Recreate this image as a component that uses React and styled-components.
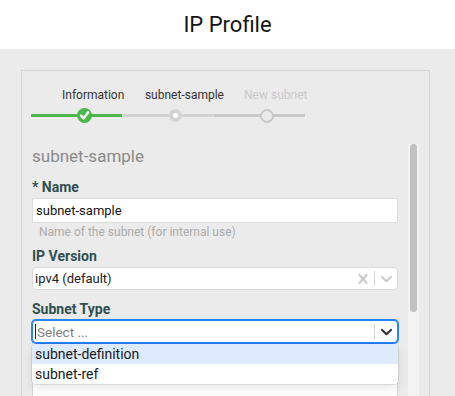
import React from "react";
import styled, { createGlobalStyle } from "styled-components";

const steps = [
  { label: "Information", state: "done" },
  { label: "subnet-sample", state: "current" },
  { label: "New subnet", state: "todo" },
];

const App = () => {
  return (
    <>
      <GlobalStyle />
      <Header>IP Profile</Header>
      <Main>
        <Panel>
          <Stepper>
            {steps.map((step, i) => (
              <Step key={step.label}>
                <StepLabel $muted={step.state === "todo"}>{step.label}</StepLabel>
                <Track $color={i === 0 ? "#4cb84c" : i === 1 ? "#d3d3d3" : "#c8c8c8"}>
                  {step.state === "done" && (
                    <DoneDot>
                      <svg width="15" height="15" viewBox="0 0 15 15">
                        <path
                          d="M4 7.6 L6.6 10.4 L11.2 4.2"
                          fill="none"
                          stroke="#fff"
                          strokeWidth="2.4"
                          strokeLinecap="round"
                          strokeLinejoin="round"
                        />
                      </svg>
                    </DoneDot>
                  )}
                  {step.state === "current" && <CurrentDot />}
                  {step.state === "todo" && <TodoDot />}
                </Track>
              </Step>
            ))}
          </Stepper>

          <ScrollArea>
            <Content>
              <Heading>subnet-sample</Heading>

              <Field>
                <Label>* Name</Label>
                <TextInput defaultValue="subnet-sample" />
                <Help>Name of the subnet (for internal use)</Help>
              </Field>

              <Field>
                <Label>IP Version</Label>
                <SelectBox>
                  <SelectValue>ipv4 (default)</SelectValue>
                  <Indicator>
                    <svg width="20" height="20" viewBox="0 0 20 20" fill="currentColor">
                      <path d="M14.348 14.849c-0.469 0.469-1.229 0.469-1.697 0l-2.651-3.030-2.651 3.029c-0.469 0.469-1.229 0.469-1.697 0-0.469-0.469-0.469-1.229 0-1.697l2.758-3.15-2.759-3.152c-0.469-0.469-0.469-1.228 0-1.697s1.228-0.469 1.697 0l2.652 3.031 2.651-3.031c0.469-0.469 1.228-0.469 1.697 0s0.469 1.229 0 1.697l-2.758 3.152 2.758 3.15c0.469 0.469 0.469 1.229 0 1.698z" />
                    </svg>
                  </Indicator>
                  <Separator />
                  <Indicator>
                    <Chevron />
                  </Indicator>
                </SelectBox>
              </Field>

              <Field>
                <Label>Subnet Type</Label>
                <SelectWrap>
                  <SelectBox $focused>
                    <SelectValue $placeholder>
                      <Caret />
                      Select ...
                    </SelectValue>
                    <Separator />
                    <Indicator $dark>
                      <Chevron />
                    </Indicator>
                  </SelectBox>
                  <Menu>
                    <Option $active>subnet-definition</Option>
                    <Option>subnet-ref</Option>
                  </Menu>
                </SelectWrap>
              </Field>

              <TextArea aria-label="Description" />
            </Content>
            <ScrollRail>
              <ScrollThumb />
            </ScrollRail>
          </ScrollArea>
        </Panel>
      </Main>
    </>
  );
};

const Chevron = () => (
  <svg width="19" height="19" viewBox="0 0 20 20" fill="currentColor">
    <path d="M4.516 7.548c0.436-0.446 1.043-0.481 1.576 0l3.908 3.747 3.908-3.747c0.533-0.481 1.141-0.446 1.574 0 0.436 0.445 0.408 1.197 0 1.615-0.406 0.418-4.695 4.502-4.695 4.502-0.217 0.223-0.502 0.335-0.787 0.335s-0.57-0.112-0.789-0.335c0 0-4.287-4.084-4.695-4.502s-0.436-1.17 0-1.615z" />
  </svg>
);

//STYLED
const GlobalStyle = createGlobalStyle`
  html, body {
    margin: 0;
    padding: 0;
    background: #ebebeb;
    overflow: hidden;
    font-family: Roboto, "Liberation Sans", sans-serif;
  }
  * {
    box-sizing: border-box;
  }
`;

const Header = styled.header`
  height: 49px;
  background: #fff;
  display: flex;
  align-items: center;
  justify-content: center;
  font-size: 22px;
  color: #151515;
`;

const Main = styled.main`
  padding: 21px 25px 0 21px;
`;

const Panel = styled.section`
  height: 420px;
  border: 1px solid #d6d6d6;
  border-bottom: none;
  display: flex;
  flex-direction: column;
`;

const Stepper = styled.div`
  display: flex;
  margin: 16px 0 0 9px;
`;

const Step = styled.div`
  width: 91.3px;
  display: flex;
  flex-direction: column;
`;

const StepLabel = styled.div`
  display: flex;
  justify-content: center;
  padding-left: 33px;
  font-size: 12px;
  line-height: 16px;
  white-space: nowrap;
  color: ${(p) => (p.$muted ? "#c9c9c9" : "#333")};
`;

const Track = styled.div`
  margin-top: 5px;
  height: 15px;
  display: flex;
  align-items: center;
  background: linear-gradient(${(p) => p.$color}, ${(p) => p.$color}) center / 100% 3px
    no-repeat;
`;

const DoneDot = styled.div`
  width: 15px;
  height: 15px;
  margin-left: 45.5px;
  border-radius: 50%;
  background: #4cb84c;
  display: flex;
  svg {
    display: block;
  }
`;

const CurrentDot = styled.div`
  width: 13px;
  height: 13px;
  margin-left: 46.5px;
  border-radius: 50%;
  background: #d3d3d3;
  display: flex;
  align-items: center;
  justify-content: center;
  &::after {
    content: "";
    width: 5px;
    height: 5px;
    border-radius: 50%;
    background: #fff;
  }
`;

const TodoDot = styled.div`
  width: 14px;
  height: 14px;
  margin-left: 46px;
  border-radius: 50%;
  border: 2px solid #c8c8c8;
  background: #ebebeb;
`;

const ScrollArea = styled.div`
  width: 397px;
  height: 270px;
  margin-top: 21px;
  display: flex;
  overflow: hidden;
`;

const Content = styled.div`
  width: 386px;
  flex: none;
  padding: 2px 10px 0;
`;

const ScrollRail = styled.div`
  width: 11px;
  flex: none;
  padding: 0 2px;
  background: #f3f3f3;
`;

const ScrollThumb = styled.div`
  height: 168px;
  border-radius: 4px;
  background: #c1c1c1;
`;

const Heading = styled.h2`
  margin: 0 0 12px;
  font-size: 17px;
  line-height: 20px;
  font-weight: 400;
  color: #8a8a8a;
`;

const Field = styled.div`
  margin-bottom: 10px;
`;

const Label = styled.label`
  display: block;
  margin-bottom: 2px;
  font-size: 14px;
  line-height: 18px;
  font-weight: 700;
  color: #2f4f4f;
`;

const TextInput = styled.input`
  display: block;
  width: 100%;
  height: 25px;
  padding: 0 3px;
  border: 1px solid #dcdcdc;
  background: #fff;
  font-family: inherit;
  font-size: 13px;
  color: #151515;
  outline: none;
`;

const Help = styled.div`
  padding: 3px 7px 0;
  margin-bottom: -2px;
  font-size: 12px;
  line-height: 13px;
  color: #ababab;
`;

const SelectWrap = styled.div`
  position: relative;
`;

const SelectBox = styled.div`
  height: 23px;
  display: flex;
  align-items: center;
  background: #fff;
  border-radius: 4px;
  border: 1px solid ${(p) => (p.$focused ? "#2684ff" : "#dadada")};
  box-shadow: ${(p) => (p.$focused ? "0 0 0 1px #2684ff" : "none")};
`;

const SelectValue = styled.div`
  flex: 1;
  display: flex;
  align-items: center;
  padding-left: 2px;
  font-size: ${(p) => (p.$placeholder ? "13.5px" : "13px")};
  color: ${(p) => (p.$placeholder ? "#808080" : "#222")};
`;

const Caret = styled.span`
  width: 1px;
  height: 15px;
  margin-right: 1px;
  background: #222;
`;

const Indicator = styled.div`
  width: 22px;
  display: flex;
  align-items: center;
  justify-content: center;
  color: ${(p) => (p.$dark ? "#333" : "#cccccc")};
  svg {
    display: block;
  }
`;

const Separator = styled.span`
  width: 1px;
  align-self: stretch;
  margin: 3px 0;
  background: #d4d4d4;
`;

const Menu = styled.div`
  position: absolute;
  top: calc(100% + 1px);
  left: 0;
  right: 0;
  z-index: 2;
  overflow: hidden;
  background: #fff;
  border-radius: 4px;
  box-shadow: 0 0 0 1px rgba(0, 0, 0, 0.08), 0 4px 11px rgba(0, 0, 0, 0.1);
`;

const Option = styled.div`
  height: 20px;
  line-height: 20px;
  padding: 0 3px;
  font-size: 14px;
  color: #1a1a1a;
  background: ${(p) => (p.$active ? "#deebff" : "#fff")};
`;

const TextArea = styled.textarea`
  display: block;
  width: 100%;
  height: 90px;
  margin-top: 20px;
  border: 1px solid #d6d6d6;
  background: #fff;
  resize: none;
  font-family: inherit;
`;

export default App;
